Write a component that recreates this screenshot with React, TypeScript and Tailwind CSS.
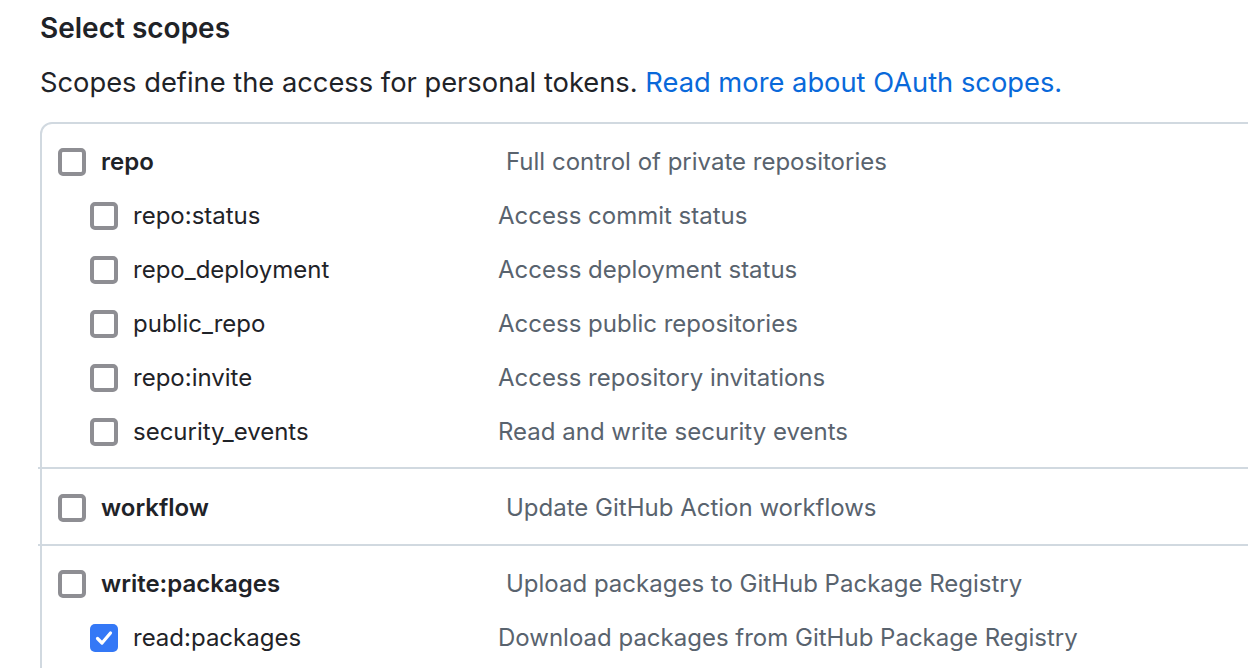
import React, { useState } from "react";

type Scope = {
  name: string;
  desc: string;
  children?: { name: string; desc: string }[];
};

const groups: Scope[] = [
  {
    name: "repo",
    desc: "Full control of private repositories",
    children: [
      { name: "repo:status", desc: "Access commit status" },
      { name: "repo_deployment", desc: "Access deployment status" },
      { name: "public_repo", desc: "Access public repositories" },
      { name: "repo:invite", desc: "Access repository invitations" },
      { name: "security_events", desc: "Read and write security events" },
    ],
  },
  { name: "workflow", desc: "Update GitHub Action workflows" },
  {
    name: "write:packages",
    desc: "Upload packages to GitHub Package Registry",
    children: [{ name: "read:packages", desc: "Download packages from GitHub Package Registry" }],
  },
];

const Checkbox = ({ checked, onClick }: { checked: boolean; onClick: () => void }) => (
  <button
    onClick={onClick}
    className={
      checked
        ? "w-[28px] h-[28px] shrink-0 rounded-[5px] bg-[#3478f6] flex items-center justify-center"
        : "w-[28px] h-[28px] shrink-0 rounded-[5px] border-[4px] border-[#8e8e93] bg-white"
    }
  >
    {checked && (
      <svg width="20" height="20" viewBox="0 0 20 20" fill="none">
        <path d="M3.5 10.5 L8 15 L16.5 5" stroke="white" strokeWidth="3.2" strokeLinecap="round" strokeLinejoin="round" />
      </svg>
    )}
  </button>
);

const App = () => {
  const [checked, setChecked] = useState<Record<string, boolean>>({ "read:packages": true });
  const toggle = (name: string) => setChecked({ ...checked, [name]: !checked[name] });

  return (
    <div className="w-[1248px] h-[668px] overflow-hidden bg-white pl-[40px] font-['Inter',sans-serif] text-[#1f2328]">
      <h2 className="pt-[10px] text-[28px] leading-[36px] font-semibold">Select scopes</h2>
      <p className="mt-[19px] text-[27.3px] leading-[36px]">
        Scopes define the access for personal tokens.{" "}
        <a href="#" className="text-[#0969da]">Read more about OAuth scopes.</a>
      </p>
      <div className="mt-[21px] w-[1240px] border-2 border-[#d1d9e0] rounded-[12px]">
        {groups.map((g, i) => (
          <div
            key={g.name}
            className={
              i === 0
                ? "pt-[11px] pb-[8px]"
                : i === 1
                ? "border-t-2 border-[#d1d9e0] -ml-[4px] pl-[4px] pt-[12px] pb-[9px]"
                : "border-t-2 border-[#d1d9e0] -ml-[4px] pl-[4px] pt-[11px] pb-[40px]"
            }
          >
            <div className="h-[54px] flex items-center pl-[16px]">
              <Checkbox checked={!!checked[g.name]} onClick={() => toggle(g.name)} />
              <span className="ml-[15px] w-[405px] text-[24px] font-semibold">{g.name}</span>
              <span className="text-[24px] text-[#59636e]">{g.desc}</span>
            </div>
            {g.children?.map((c) => (
              <div key={c.name} className="h-[54px] flex items-center pl-[48px]">
                <Checkbox checked={!!checked[c.name]} onClick={() => toggle(c.name)} />
                <span className="ml-[15px] w-[365px] text-[24px]">{c.name}</span>
                <span className="text-[24px] text-[#59636e]">{c.desc}</span>
              </div>
            ))}
          </div>
        ))}
      </div>
    </div>
  );
};

export default App;
